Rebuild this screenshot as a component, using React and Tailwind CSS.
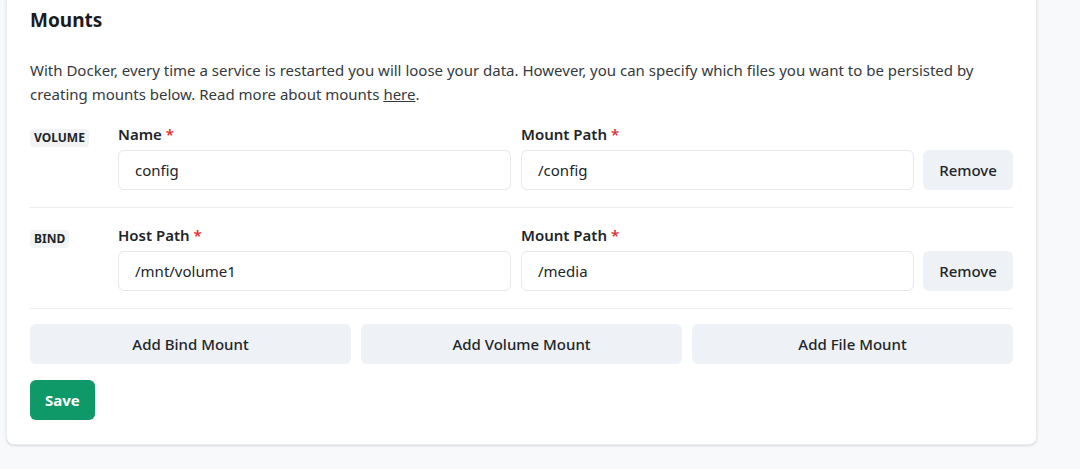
import React from 'react';

const font = { fontFamily: "'Segoe UI', 'Noto Sans', sans-serif" };

const Label = ({ children }) => (
  <label className="mb-1.5 block text-[15px] font-semibold leading-5 text-[#212529]">
    {children} <span className="text-[#e03131]">*</span>
  </label>
);

const Field = ({ label, value }) => (
  <div>
    <Label>{label}</Label>
    <input
      readOnly
      value={value}
      className="h-10 w-full rounded-md border border-[#e5e7eb] bg-white px-4 text-[15px] text-[#212529] outline-none"
    />
  </div>
);

const MountRow = ({ type, first, second }) => (
  <div className="flex border-b border-[#eceef1] py-[17px]">
    <div className="w-[88px]">
      <span className="inline-block rounded-sm bg-[#f1f3f5] px-1 text-[12px] font-bold leading-[18px] text-[#212529]">
        {type}
      </span>
    </div>
    <div className="grid flex-1 grid-cols-2 gap-[10px]">
      <Field label={first.label} value={first.value} />
      <Field label={second.label} value={second.value} />
    </div>
    <div className="ml-[9px] flex w-[90px] items-end">
      <button className="h-10 w-full rounded-md bg-[#eef2f6] text-[15px] font-medium text-[#212529]">
        Remove
      </button>
    </div>
  </div>
);

export default function App() {
  return (
    <div className="min-h-screen overflow-hidden bg-[#f8f9fb]" style={font}>
      <div className="-mt-2 ml-[6px] w-[1031px] rounded-lg border border-[#e9ecef] bg-white px-[23px] pb-6 pt-[13px] shadow-sm">
        <h2 className="mb-6 text-[19px] font-bold leading-7 text-[#1a1b1e]">Mounts</h2>
        <p className="mb-px text-[15px] leading-6 text-[#343a40]">
          With Docker, every time a service is restarted you will loose your data. However, you can specify which files you want to be persisted by creating mounts below. Read more about mounts{' '}
          <a className="underline">here</a>.
        </p>

        <MountRow
          type="VOLUME"
          first={{ label: 'Name', value: 'config' }}
          second={{ label: 'Mount Path', value: '/config' }}
        />
        <MountRow
          type="BIND"
          first={{ label: 'Host Path', value: '/mnt/volume1' }}
          second={{ label: 'Mount Path', value: '/media' }}
        />

        <div className="mt-[15px] grid grid-cols-3 gap-[10px]">
          {['Add Bind Mount', 'Add Volume Mount', 'Add File Mount'].map((t) => (
            <button
              key={t}
              className="h-10 rounded-md bg-[#eef2f6] text-[15px] font-medium text-[#212529]"
            >
              {t}
            </button>
          ))}
        </div>

        <button className="mt-4 h-10 rounded-md bg-[#0f9968] px-[15px] text-[15px] font-bold text-white">
          Save
        </button>
      </div>
    </div>
  );
}
